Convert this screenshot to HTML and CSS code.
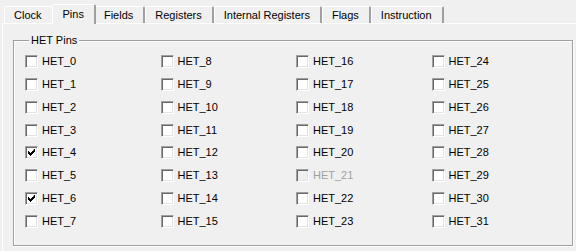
FILE: index.html
```html
<!DOCTYPE html>
<html lang="en">
<head>
  <meta charset="UTF-8">
  <title>HET Pins</title>
  <link rel="stylesheet" href="styles.css">
</head>
<body>
  <div class="tabs">
    <div class="tab">Clock</div>
    <div class="tab active">Pins</div>
    <div class="tab">Fields</div>
    <div class="tab">Registers</div>
    <div class="tab">Internal Registers</div>
    <div class="tab">Flags</div>
    <div class="tab">Instruction</div>
  </div>

  <div class="panel">
    <fieldset class="group">
      <legend>HET Pins</legend>
      <div class="pins" id="pins"></div>
    </fieldset>
  </div>

  <script>
    const checked = [4, 6];
    const disabled = [21];
    const pins = document.getElementById('pins');

    // column-major order, 8 rows per column
    for (let i = 0; i < 32; i++) {
      const row = document.createElement('label');
      row.className = 'pin';
      if (disabled.includes(i)) row.classList.add('disabled');
      row.style.gridRow = (i % 8) + 1;
      row.style.gridColumn = Math.floor(i / 8) + 1;

      const box = checked.includes(i)
        ? '<svg width="7" height="7" viewBox="0 0 7 7"><path d="M6 0h1v3h-1v1h-1v1h-1v1h-1v1h-1v-1h-1v-1h-1v-3h1v1h1v1h1v-1h1v-1h1z" fill="#000"/></svg>'
        : '';
      row.innerHTML = `<span class="box">${box}</span><span>HET_${i}</span>`;
      pins.appendChild(row);
    }
  </script>
</body>
</html>
```

FILE: styles.css
```css
body {
  margin: 0;
  background-color: #f0f0f0;
  font-family: "Liberation Sans", Arial, sans-serif;
  font-size: 11px;
  color: #000;
  overflow: hidden;
}

.tabs {
  display: flex;
  align-items: flex-end;
  height: 23px;
  padding-left: 4px;
}

.tab {
  height: 17px;
  line-height: 17px;
  padding: 0 10px 0 9px;
  border-top: 1px solid #fff;
  border-left: 1px solid #fff;
  border-right: 2px solid #a0a0a0;
  border-radius: 2px 2px 0 0;
  box-sizing: border-box;
}

.tab.active {
  height: 20px;
  line-height: 18px;
  margin: 0 -2px -1px;
  padding: 0 10px;
  background-color: #f0f0f0;
  position: relative;
  z-index: 1;
}

.panel {
  border-top: 1px solid #fff;
  border-left: 1px solid #fff;
  margin-left: 2px;
  height: 228px;
  padding: 10px 0 0 10px;
  box-sizing: border-box;
}

.group {
  width: 560px;
  height: 212px;
  margin: 0;
  padding: 0 0 0 11px;
  border: 1px solid #a0a0a0;
  box-shadow: inset 1px 1px 0 #fff, 1px 1px 0 #fff;
  box-sizing: border-box;
}

.group legend {
  margin-left: 4px;
  padding: 0 2px;
  background-color: #f0f0f0;
  line-height: 13px;
}

.pins {
  display: grid;
  grid-template-columns: repeat(4, 135.5px);
  grid-auto-rows: 22.86px;
  margin-top: 8px;
}

.pin {
  display: flex;
  align-items: flex-start;
  gap: 4px;
  line-height: 13px;
}

.box {
  width: 13px;
  height: 13px;
  box-sizing: border-box;
  border: 1px solid;
  border-color: #a0a0a0 #fff #fff #a0a0a0;
  box-shadow: inset 1px 1px 0 #696969, inset -1px -1px 0 #e3e3e3;
  background-color: #fff;
  display: flex;
  align-items: center;
  justify-content: center;
}

.box svg {
  display: block;
}

.pin.disabled {
  color: #a0a0a0;
}

.pin.disabled .box {
  background-color: #f0f0f0;
}
```
